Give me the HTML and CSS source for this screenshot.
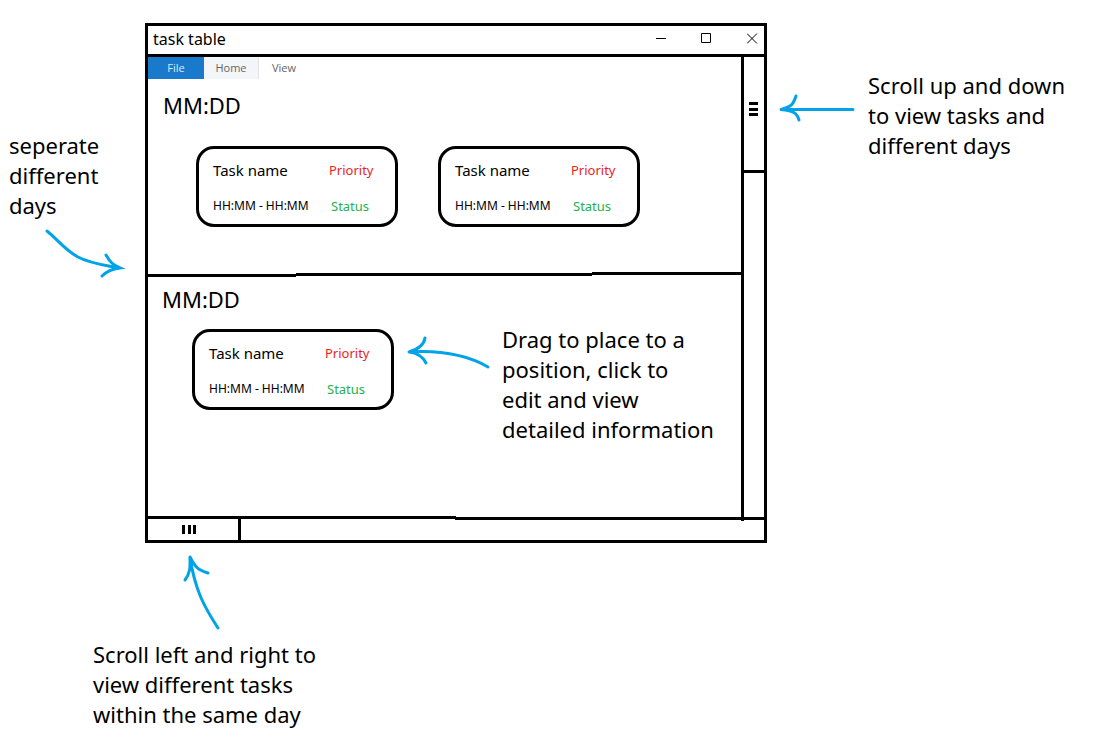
FILE: index.html
```html
<!DOCTYPE html>
<html lang="en">
<head>
<meta charset="utf-8">
<title>task table</title>
<link rel="stylesheet" href="styles.css">
</head>
<body>
<main class="board">
  <aside class="side-left">
    <p class="note">seperate<br>different<br>days</p>
    <svg class="arrow arrow-days" width="80" height="50" viewBox="0 0 80 50" aria-hidden="true">
      <path d="M2 1C12 9 21 21 33 27C46 34 60 35 75 38M61 25C65 32 68 35 75 38C67 39 62 41 57 46"/>
    </svg>
  </aside>

  <section class="window">
    <header class="titlebar">
      <h1 class="title">task table</h1>
      <div class="controls">
        <button class="control" aria-label="Minimize"><svg width="11" height="11" viewBox="0 0 11 11"><path d="M1 5.500H11"/></svg></button>
        <button class="control" aria-label="Maximize"><svg width="11" height="11" viewBox="0 0 11 11"><path d="M.5 .5H9.500V9.500H.5Z"/></svg></button>
        <button class="control" aria-label="Close"><svg width="11" height="11" viewBox="0 0 11 11"><path d="M0 .5L10 10.500M10 .5L0 10.500"/></svg></button>
      </div>
    </header>

    <div class="body">
      <div class="content">
        <nav class="tabs">
          <button class="tab tab-file">File</button>
          <button class="tab tab-home">Home</button>
          <button class="tab tab-view">View</button>
        </nav>

        <section class="day day-first">
          <h2 class="date">MM:DD</h2>
          <div class="tasks tasks-pair">
            <button class="task">
              <span class="name">Task name</span><span class="priority">Priority</span>
              <span class="time">HH:MM - HH:MM</span><span class="status">Status</span>
            </button>
            <button class="task">
              <span class="name">Task name</span><span class="priority">Priority</span>
              <span class="time">HH:MM - HH:MM</span><span class="status">Status</span>
            </button>
          </div>
        </section>

        <svg class="rule" viewBox="0 0 593 5" preserveAspectRatio="none" aria-hidden="true">
          <path d="M0 2H148V1H444V0H593V3H444V4H148V5H0Z"/>
        </svg>

        <section class="day day-second">
          <h2 class="date">MM:DD</h2>
          <div class="tasks tasks-noted">
            <button class="task">
              <span class="name">Task name</span><span class="priority">Priority</span>
              <span class="time">HH:MM - HH:MM</span><span class="status">Status</span>
            </button>
            <svg class="arrow arrow-drag" width="84" height="36" viewBox="0 0 84 36" aria-hidden="true">
              <path d="M82 32C61 20 36 15 3 17M19 3C18 10 13 14 3 17C12 18 17 22 20 28"/>
            </svg>
            <p class="note">Drag to place to a<br>position, click to<br>edit and view<br>detailed information</p>
          </div>
        </section>
      </div>

      <div class="vscroll">
        <div class="vthumb"><svg width="9" height="14" viewBox="0 0 9 14" aria-hidden="true"><path d="M0 0H9V3H0ZM0 6H9V9H0ZM0 11H9V14H0Z"/></svg></div>
      </div>
    </div>

    <footer class="hscroll">
      <svg class="rule" viewBox="0 0 616 5" preserveAspectRatio="none" aria-hidden="true">
        <path d="M0 0H308V1H593V0H596V1H616V4H596V5H593V4H307V3H93V5H90V3H0Z"/>
      </svg>
      <div class="hthumb"><svg width="14" height="9" viewBox="0 0 14 9" aria-hidden="true"><path d="M0 0V9H3V0ZM6 0V9H9V0ZM11 0V9H14V0Z"/></svg></div>
    </footer>
  </section>

  <aside class="side-right">
    <svg class="arrow" width="76" height="30" viewBox="0 0 76 30" aria-hidden="true">
      <path d="M74 15.500H2M17 2C14 11 12 13 2 15.500C15 17 18 19 20 26"/>
    </svg>
    <p class="note">Scroll up and down<br>to view tasks and<br>different days</p>
  </aside>

  <aside class="below">
    <svg class="arrow arrow-below" width="36" height="76" viewBox="0 0 36 76" aria-hidden="true">
      <path d="M35 73C22 53 12 36 7 2M2 25C8 17 7 11 7 2C12 12 15 15 25 18"/>
    </svg>
    <p class="note">Scroll left and right to<br>view different tasks<br>within the same day</p>
  </aside>
</main>
</body>
</html>
```
FILE: styles.css
```css
* { box-sizing: border-box; }

body {
  margin: 0;
  background: #fff;
  color: #000;
  font-family: "Comic Sans MS", "Noto Sans", sans-serif;
}

h1, h2, p { margin: 0; font-weight: 400; }

button {
  margin: 0;
  padding: 0;
  border: 0;
  background: none;
  color: inherit;
  font: inherit;
  text-align: left;
}

svg { display: block; flex: none; }

.board {
  display: grid;
  grid-template-columns: 145fr 622fr 347fr;
  padding-top: 23px;
}

.note { font-size: 22px; line-height: 30px; white-space: nowrap; }

.arrow {
  fill: none;
  stroke: #00a2e8;
  stroke-width: 3;
  stroke-linecap: round;
  overflow: visible;
}

.side-left { padding: 107px 0 0 9px; }
.arrow-days { margin: 10px 0 0 36px; }

.side-right {
  display: flex;
  align-items: flex-start;
  gap: 13px;
  padding: 47px 0 0 12px;
}
.side-right .arrow { margin-top: 24px; }

.below { grid-column: 1 / -1; padding: 12px 0 0 93px; }
.arrow-below { margin: 0 0 8px 90px; }

.window { border: 3px solid #000; }

.titlebar {
  display: flex;
  align-items: center;
  justify-content: space-between;
  height: 31px;
  padding: 0 6px 3px 5px;
  border-bottom: 3px solid #000;
}
.title { font-size: 16px; line-height: 24px; }
.controls { display: flex; gap: 35px; }
.control svg { fill: none; stroke: #000; stroke-width: 1; }

.body { display: flex; }
.content { flex: 1; min-width: 0; }

.tabs { display: flex; height: 22px; }
.tab {
  font-family: "Segoe UI", "Open Sans", sans-serif;
  font-size: 11px;
  line-height: 22px;
  color: #666;
  text-align: center;
}
.tab-file { width: 56px; background: #1979ca; color: #d8ebfa; }
.tab-home { width: 55px; background: #f4f5f8; border-right: 1px solid #e2e3e6; }
.tab-view { width: 50px; }

.date { font-size: 22px; line-height: 30px; }
.day-first { min-height: 193px; padding: 11px 0 0 15px; }
.day-second { min-height: 239px; padding: 7px 0 0 14px; }

.tasks { display: flex; align-items: flex-start; }
.tasks-pair { gap: 40px; padding: 26px 0 0 33px; }
.tasks-noted { padding: 10px 0 0 30px; }
.tasks-noted .task { margin-top: 5px; }
.arrow-drag { margin: 11px 12px 0 12px; }

.task {
  display: grid;
  grid-template-columns: 116px 1fr;
  align-content: start;
  row-gap: 12px;
  width: 202px;
  height: 81px;
  padding: 9px 12px 0 14px;
  border: 3px solid #000;
  border-radius: 18px;
  line-height: 24px;
}
.name { font-size: 15px; }
.time { font-size: 12px; }
.priority, .status { font-size: 13px; }
.priority { color: #ed1c24; }
.status { color: #22b14c; padding-left: 2px; }

.rule { width: 100%; height: 5px; }

.vscroll { width: 23px; border-left: 3px solid #000; }
.vthumb {
  display: flex;
  align-items: center;
  height: 116px;
  padding: 0 0 9px 5px;
  border-bottom: 3px solid #000;
}

.hthumb {
  display: flex;
  align-items: center;
  justify-content: center;
  width: 93px;
  height: 19px;
  padding-right: 8px;
  padding-bottom: 2px;
  border-right: 3px solid #000;
}
```
